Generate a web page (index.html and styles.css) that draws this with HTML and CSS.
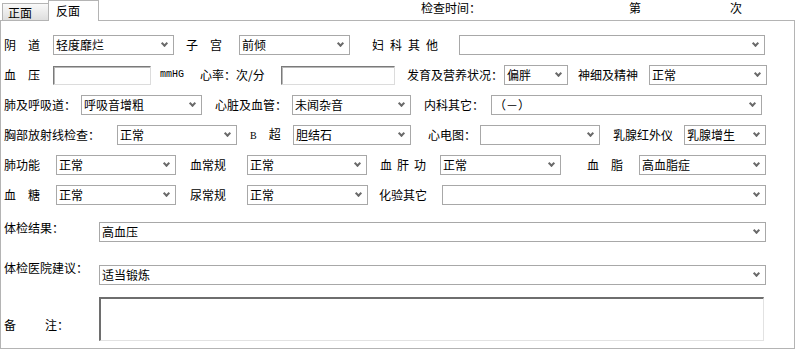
FILE: index.html
```html
<!DOCTYPE html>
<html lang="zh-CN">
<head>
    <meta charset="UTF-8">
    <meta name="viewport" content="width=device-width, initial-scale=1.0">
    <title>体检表 - 反面</title>
    <link rel="stylesheet" href="styles.css">
</head>
<body>
    <div class="tabbar">
        <div class="tabs">
            <div class="tab">正面</div>
            <div class="tab active">反面</div>
        </div>
        <span class="meta time">检查时间：</span>
        <span class="meta no">第</span>
        <span class="meta ci">次</span>
    </div>
    <div class="panel">
        <div class="row">
            <span class="lab w49">阴　道</span>
            <div class="combo w121">轻度靡烂</div>
            <span class="lab ml12 w53">子　宫</span>
            <div class="combo w111">前倾</div>
            <span class="lab ml22 w87 ls6">妇科其他</span>
            <div class="combo w306"></div>
        </div>
        <div class="row">
            <span class="lab w49">血　压</span>
            <input type="text" class="field w98">
            <span class="lab unit ml9 w40">mmHG</span>
            <span class="lab w81">心率：次/分</span>
            <input type="text" class="field w114">
            <span class="lab ml12 w97">发育及营养状况：</span>
            <div class="combo w64">偏胖</div>
            <span class="lab ml10 w71">神细及精神</span>
            <div class="combo w118">正常</div>
        </div>
        <div class="row">
            <span class="lab w77">肺及呼吸道：</span>
            <div class="combo w121">呼吸音增粗</div>
            <span class="lab ml13 w77">心脏及血管：</span>
            <div class="combo w119">未闻杂音</div>
            <span class="lab ml13 w67">内科其它：</span>
            <div class="combo w271">（－）</div>
        </div>
        <div class="row">
            <span class="lab w113">胸部放射线检查：</span>
            <div class="combo w120">正常</div>
            <span class="lab ml13 w43"><span class="latin">B</span>超</span>
            <div class="combo w118">胆结石</div>
            <span class="lab ml17 w52">心电图：</span>
            <div class="combo w120"></div>
            <span class="lab ml13 w71">乳腺红外仪</span>
            <div class="combo w82">乳腺增生</div>
        </div>
        <div class="row">
            <span class="lab w52">肺功能</span>
            <div class="combo w120">正常</div>
            <span class="lab ml14 w57">血常规</span>
            <div class="combo w120">正常</div>
            <span class="lab ml13 w60 ls5">血肝功</span>
            <div class="combo w121">正常</div>
            <span class="lab ml26 w52">血　脂</span>
            <div class="combo w127">高血脂症</div>
        </div>
        <div class="row">
            <span class="lab w52">血　糖</span>
            <div class="combo w120">正常</div>
            <span class="lab ml14 w57">尿常规</span>
            <div class="combo w121">正常</div>
            <span class="lab ml11 w63">化验其它</span>
            <div class="combo w324"></div>
        </div>
        <div class="row wide result">
            <span class="lab w95">体检结果：</span>
            <div class="combo w667">高血压</div>
        </div>
        <div class="row wide advice">
            <span class="lab w95">体检医院建议：</span>
            <div class="combo w667">适当锻炼</div>
        </div>
        <div class="row wide note">
            <span class="lab w95"><span class="first">备</span>注：</span>
            <textarea class="memo w665"></textarea>
        </div>
    </div>
</body>
</html>
```

FILE: styles.css
```css
body {
    margin: 0;
    background-color: #fff;
    color: #000;
    font-family: "Noto Sans CJK SC", "Noto Sans", sans-serif;
    font-size: 12px;
    overflow: hidden;
}
.tabbar {
    display: flex;
    align-items: flex-start;
    height: 20px;
}
.tabs {
    display: flex;
    align-items: flex-end;
    height: 20px;
}
.tab {
    box-sizing: border-box;
    height: 17px;
    width: 46px;
    margin-left: 2px;
    padding: 1px 0 0 5px;
    line-height: 15px;
    border: 1px solid #b4b4b4;
    border-bottom: none;
    border-right: none;
    background: linear-gradient(#f9f9f9, #dedede);
}
.tab.active {
    position: relative;
    z-index: 1;
    height: 21px;
    width: 51px;
    margin: 0 0 -1px 0;
    padding: 1px 0 0 7px;
    line-height: 17px;
    border-right: 1px solid #b4b4b4;
    background: #fff;
}
.meta {
    line-height: 15px;
}
.meta.time {
    margin-left: 322px;
}
.meta.no {
    margin-left: 148px;
}
.meta.ci {
    margin-left: 89px;
}
.panel {
    box-sizing: border-box;
    width: 795px;
    height: 329px;
    border: 1px solid #b4b4b4;
    padding: 14px 0 0 3px;
}
.row {
    display: flex;
    align-items: center;
    height: 20px;
    margin-top: 10px;
}
.row:first-child {
    margin-top: 0;
}
.row.wide {
    align-items: flex-start;
}
.row.result {
    margin-top: 17px;
}
.row.advice {
    margin-top: 23px;
}
.row.note {
    height: 44px;
    margin-top: 12px;
}
.lab {
    flex: none;
    white-space: nowrap;
    line-height: 20px;
}
.row.wide .lab {
    line-height: 14px;
}
.row.result .lab {
    margin-top: -1px;
}
.row.advice .lab {
    margin-top: -4px;
}
.row.note .lab {
    margin-top: 21px;
}
.lab .first {
    margin-right: 29px;
}
.lab .latin {
    font-family: "Liberation Serif", serif;
    font-size: 10px;
    margin-right: 12px;
}
.unit {
    font-family: "Liberation Mono", monospace;
    font-size: 10px;
}
.ls5 {
    letter-spacing: 5px;
}
.ls6 {
    letter-spacing: 6px;
}
.combo {
    flex: none;
    position: relative;
    box-sizing: border-box;
    height: 20px;
    padding-left: 2px;
    line-height: 18px;
    border: 1px solid #a8a8a8;
    background-color: #fff;
    white-space: nowrap;
}
.combo::after {
    content: "";
    position: absolute;
    right: 6px;
    top: 5px;
    width: 3px;
    height: 3px;
    border: solid #6a6a6a;
    border-width: 0 2px 2px 0;
    transform: rotate(45deg);
}
.field {
    flex: none;
    box-sizing: border-box;
    height: 19px;
    margin: 0;
    padding: 0;
    border: 1px solid;
    border-color: #7a7a7a #dcdcdc #dcdcdc #7a7a7a;
    box-shadow: inset 1px 1px 0 #b8b8b8;
    background-color: #fff;
}
.memo {
    flex: none;
    box-sizing: border-box;
    height: 44px;
    margin: 0;
    padding: 0;
    resize: none;
    border-style: solid;
    border-width: 2px 1px 1px 2px;
    border-color: #6e6e6e #e2e2e2 #e2e2e2 #6e6e6e;
    background-color: #fff;
}
.w40 { width: 40px; }
.w43 { width: 43px; }
.w49 { width: 49px; }
.w52 { width: 52px; }
.w53 { width: 53px; }
.w57 { width: 57px; }
.w60 { width: 60px; }
.w63 { width: 63px; }
.w64 { width: 64px; }
.w67 { width: 67px; }
.w71 { width: 71px; }
.w77 { width: 77px; }
.w81 { width: 81px; }
.w82 { width: 82px; }
.w87 { width: 87px; }
.w95 { width: 95px; }
.w97 { width: 97px; }
.w98 { width: 98px; }
.w111 { width: 111px; }
.w113 { width: 113px; }
.w114 { width: 114px; }
.w118 { width: 118px; }
.w119 { width: 119px; }
.w120 { width: 120px; }
.w121 { width: 121px; }
.w127 { width: 127px; }
.w271 { width: 271px; }
.w306 { width: 306px; }
.w324 { width: 324px; }
.w665 { width: 665px; }
.w667 { width: 667px; }
.ml9 { margin-left: 9px; }
.ml10 { margin-left: 10px; }
.ml11 { margin-left: 11px; }
.ml12 { margin-left: 12px; }
.ml13 { margin-left: 13px; }
.ml14 { margin-left: 14px; }
.ml17 { margin-left: 17px; }
.ml22 { margin-left: 22px; }
.ml26 { margin-left: 26px; }
```
